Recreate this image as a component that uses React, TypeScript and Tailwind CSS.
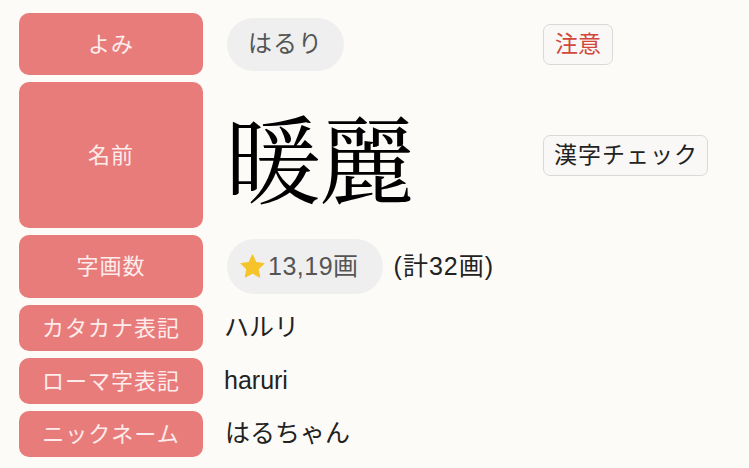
import React from "react";

const font = { fontFamily: '"Liberation Sans", "Noto Sans CJK JP", sans-serif' };

function Label({ text, h }: { text: string; h: string }) {
  return (
    <div
      className={`w-[184px] ${h} shrink-0 rounded-[10px] bg-[#e87c7b] flex items-center justify-center text-[22px] tracking-[1px] text-[#fdeceb]`}
    >
      {text}
    </div>
  );
}

function Star() {
  return (
    <svg width="27" height="27" viewBox="0 0 24 24" className="mr-[2px]">
      <path
        d="M12 1.8l3.1 6.6 7.1.9-5.2 4.9 1.3 7.1L12 17.8l-6.3 3.5 1.3-7.1-5.2-4.9 7.1-.9z"
        fill="#f6c42a"
        stroke="#f6c42a"
        strokeWidth="1"
        strokeLinejoin="round"
      />
    </svg>
  );
}

export default function App() {
  return (
    <div className="w-[749px] h-[468px] bg-[#fdfbf8] text-black overflow-hidden" style={font}>
      <div className="pl-[19px] pt-[13px] flex flex-col gap-[7px]">
        <div className="flex items-center">
          <Label text="よみ" h="h-[62px]" />
          <div className="ml-[24px] w-[316px] flex items-center">
            <div className="h-[53px] px-[21px] rounded-full bg-[#efefef] flex items-center text-[24px] tracking-[1px] text-[#555]">
              はるり
            </div>
          </div>
          <div className="h-[41px] px-[11px] rounded-[7px] border border-[#d9d9d9] bg-[#f9f8f7] flex items-center text-[23px] text-[#d2473a]">
            注意
          </div>
        </div>
        <div className="flex items-center">
          <Label text="名前" h="h-[146px]" />
          <div className="ml-[24px] w-[316px] flex items-center">
            <span
              className="text-[96px] leading-none tracking-[-2px] ml-[-2px]"
              style={{ fontFamily: '"Noto Serif CJK JP", "Noto Serif JP", serif' }}
            >
              暖麗
            </span>
          </div>
          <div className="h-[41px] pl-[10px] pr-[9px] rounded-[7px] border border-[#d9d9d9] bg-[#f9f8f7] flex items-center text-[23px] tracking-[1px] text-[#222]">
            漢字チェック
          </div>
        </div>
        <div className="flex items-center">
          <Label text="字画数" h="h-[63px]" />
          <div className="ml-[24px] flex items-center">
            <div className="h-[55px] pl-[12px] pr-[24px] rounded-full bg-[#efefef] flex items-center text-[25px] tracking-[0.5px] text-[#555]">
              <Star />
              13,19画
            </div>
            <span className="ml-[11px] text-[25px] tracking-[1px] text-[#222]">(計32画)</span>
          </div>
        </div>
        <div className="flex items-center">
          <Label text="カタカナ表記" h="h-[46px]" />
          <span className="ml-[21px] text-[25px] text-[#222]">ハルリ</span>
        </div>
        <div className="flex items-center">
          <Label text="ローマ字表記" h="h-[46px]" />
          <span className="ml-[21px] text-[25px] text-[#222]">haruri</span>
        </div>
        <div className="flex items-center">
          <Label text="ニックネーム" h="h-[46px]" />
          <span className="ml-[22px] text-[25px] text-[#222]">はるちゃん</span>
        </div>
      </div>
    </div>
  );
}
